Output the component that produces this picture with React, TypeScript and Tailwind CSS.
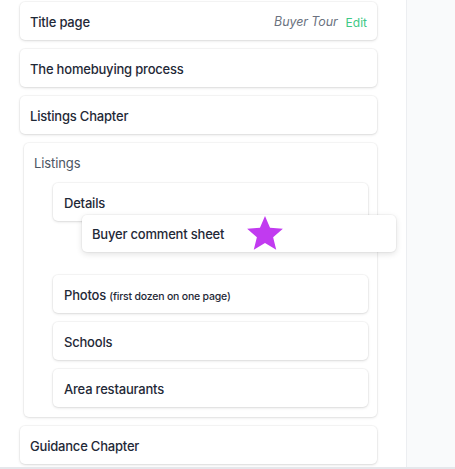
import React from 'react'

const card =
  'flex h-[38px] items-center rounded-[5px] bg-white px-[10px] pt-[3px] shadow-[0_1px_3px_rgba(0,0,0,0.12),0_0_0_1px_rgba(0,0,0,0.03)]'
const label = 'text-[13px] font-medium tracking-[-0.2px]'

function Star() {
  return (
    <svg width="40" height="39" viewBox="0 0 24 24" className="block">
      <path
        d="M12 1.2l3.1 7.3 7.9.6-6 5.2 1.9 7.7L12 17.8 5.1 22l1.9-7.7-6-5.2 7.9-.6z"
        fill="#c13af0"
      />
    </svg>
  )
}

export default function App() {
  const listings = ['Schools', 'Area restaurants']

  return (
    <div
      className="flex h-[469px] w-[455px] overflow-hidden border-b-2 border-[#e5e7eb] bg-white text-[#1f2937]"
      style={{ fontFamily: 'Inter, "Noto Sans", sans-serif' }}
    >
      <div className="flex w-[406px] shrink-0 flex-col gap-[9px] pl-[20px] pr-[29px] pt-[2px]">
        <div className={`${card} justify-between`}>
          <span className={label}>Title page</span>
          <div className="flex items-center gap-[8px]">
            <span className="text-[12.5px] tracking-[-0.1px] italic text-[#6b7280]">Buyer Tour</span>
            <span className="text-[12px] text-[#3ec985]">Edit</span>
          </div>
        </div>
        <div className={card}>
          <span className={label}>The homebuying process</span>
        </div>
        <div className={card}>
          <span className={label}>Listings Chapter</span>
        </div>

        <div className="ml-[4px] rounded-[5px] bg-white pb-[10px] pl-[29px] pr-[9px] shadow-[0_1px_3px_rgba(0,0,0,0.1),0_0_0_1px_rgba(0,0,0,0.03)]">
          <div className="-ml-[19px] flex h-[40px] items-center pt-[2px] text-[13px] tracking-[-0.1px] text-[#4b5563]">
            Listings
          </div>
          <div className="relative flex flex-col gap-[9px]">
            <div className={card}>
              <span className={`${label} pl-[1px]`}>Details</span>
            </div>
            <div className="h-[36px]" />
            <div className={card}>
              <span className={`${label} pl-[1px]`}>
                Photos <span className="text-[10.5px]">(first dozen on one page)</span>
              </span>
            </div>
            {listings.map((item) => (
              <div key={item} className={card}>
                <span className={`${label} pl-[1px]`}>{item}</span>
              </div>
            ))}

            <div className="absolute left-[29px] top-[32px] flex h-[37px] w-[314px] items-center rounded-[5px] bg-white px-[10px] pt-[3px] shadow-[0_2px_6px_rgba(0,0,0,0.12),0_0_0_1px_rgba(0,0,0,0.03)]">
              <span className={label}>Buyer comment sheet</span>
              <div className="absolute left-[163px] top-[-1px]">
                <Star />
              </div>
            </div>
          </div>
        </div>

        <div className={card}>
          <span className={label}>Guidance Chapter</span>
        </div>
      </div>
      <div className="flex-1 border-l border-[#eceef1] bg-[#f9fafb]" />
    </div>
  )
}
